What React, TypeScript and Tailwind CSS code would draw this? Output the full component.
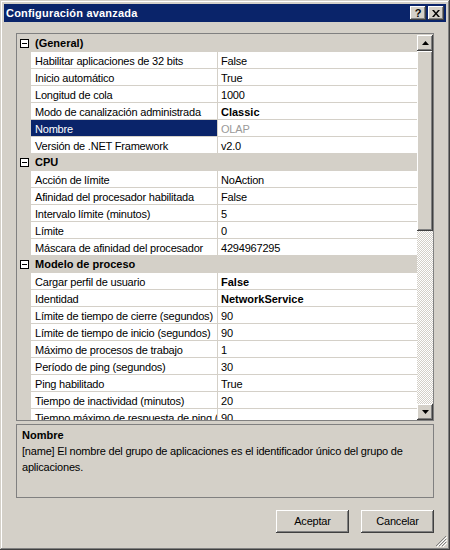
import React from 'react';

type Row = { name: string; value: string; bold?: boolean; readonly?: boolean; selected?: boolean };
type Cat = { title: string; rows: Row[] };

const cats: Cat[] = [
  {
    title: '(General)',
    rows: [
      { name: 'Habilitar aplicaciones de 32 bits', value: 'False' },
      { name: 'Inicio automático', value: 'True' },
      { name: 'Longitud de cola', value: '1000' },
      { name: 'Modo de canalización administrada', value: 'Classic', bold: true },
      { name: 'Nombre', value: 'OLAP', readonly: true, selected: true },
      { name: 'Versión de .NET Framework', value: 'v2.0' },
    ],
  },
  {
    title: 'CPU',
    rows: [
      { name: 'Acción de límite', value: 'NoAction' },
      { name: 'Afinidad del procesador habilitada', value: 'False' },
      { name: 'Intervalo límite (minutos)', value: '5' },
      { name: 'Límite', value: '0' },
      { name: 'Máscara de afinidad del procesador', value: '4294967295' },
    ],
  },
  {
    title: 'Modelo de proceso',
    rows: [
      { name: 'Cargar perfil de usuario', value: 'False', bold: true },
      { name: 'Identidad', value: 'NetworkService', bold: true },
      { name: 'Límite de tiempo de cierre (segundos)', value: '90' },
      { name: 'Límite de tiempo de inicio (segundos)', value: '90' },
      { name: 'Máximo de procesos de trabajo', value: '1' },
      { name: 'Período de ping (segundos)', value: '30' },
      { name: 'Ping habilitado', value: 'True' },
      { name: 'Tiempo de inactividad (minutos)', value: '20' },
      { name: 'Tiempo máximo de respuesta de ping (segundos)', value: '90' },
    ],
  },
];

const raised =
  'bg-[#d4d0c8] shadow-[inset_-1px_-1px_#404040,inset_1px_1px_#ffffff,inset_-2px_-2px_#808080,inset_2px_2px_#d4d0c8]';

function Minus() {
  return (
    <svg width="9" height="9" viewBox="0 0 9 9" className="block">
      <rect x="0.5" y="0.5" width="8" height="8" fill="#ffffff" stroke="#000000" />
      <line x1="2" y1="4.5" x2="7" y2="4.5" stroke="#000000" />
    </svg>
  );
}

function Arrow({ down }: { down?: boolean }) {
  return (
    <svg width="7" height="4" viewBox="0 0 7 4" className="block">
      {down ? <polygon points="0,0 7,0 3.5,4" fill="#000" /> : <polygon points="3.5,0 7,4 0,4" fill="#000" />}
    </svg>
  );
}

function CategoryRow({ title }: { title: string }) {
  return (
    <div className="flex h-[17px] bg-[#d4d0c8]">
      <div className="w-[14px] flex items-center justify-center pl-[1px]">
        <Minus />
      </div>
      <div className="pl-[4px] leading-[17px] font-bold tracking-normal">{title}</div>
    </div>
  );
}

function PropRow({ row }: { row: Row }) {
  return (
    <div className="flex h-[17px]">
      <div className="w-[14px] shrink-0 bg-[#d4d0c8]" />
      <div
        className={
          'w-[187px] shrink-0 border-b border-r border-[#d4d0c8] pl-[4px] pt-[1px] leading-[16px] whitespace-nowrap overflow-hidden ' +
          (row.selected ? 'bg-[#0a246a] text-white' : 'bg-white')
        }
      >
        {row.name}
      </div>
      <div
        className={
          'flex-1 border-b border-[#d4d0c8] bg-white pl-[3px] pt-[1px] leading-[16px] whitespace-nowrap overflow-hidden ' +
          (row.bold ? 'font-bold tracking-normal ' : '') +
          (row.readonly ? 'text-[#9a9a9a]' : 'text-black')
        }
      >
        {row.value}
      </div>
    </div>
  );
}

export default function App() {
  return (
    <div
      className="relative w-[450px] h-[550px] bg-[#d4d0c8] p-[4px] flex flex-col text-[11px] tracking-[-0.2px] text-black shadow-[inset_-1px_-1px_#404040,inset_1px_1px_#d4d0c8,inset_-2px_-2px_#808080,inset_2px_2px_#ffffff]"
      style={{ fontFamily: '"Liberation Sans", Arial, sans-serif' }}
    >
      {/* title bar */}
      <div className="h-[18px] bg-[#0a246a] flex items-center pl-[2px] pr-[2px]">
        <div className="text-white font-bold text-[11px] tracking-[0.2px] flex-1">Configuración avanzada</div>
        <div className={'w-[16px] h-[14px] flex items-center justify-center font-bold text-[11px] leading-none ' + raised}>?</div>
        <div className={'ml-[2px] w-[16px] h-[14px] flex items-center justify-center ' + raised}>
          <svg width="8" height="7" viewBox="0 0 8 7" className="block">
            <path d="M0 0 L2 0 L4 2.5 L6 0 L8 0 L5 3.5 L8 7 L6 7 L4 4.5 L2 7 L0 7 L3 3.5 Z" fill="#000" />
          </svg>
        </div>
      </div>

      <div className="flex-1 flex flex-col px-[12px] pt-[11px]">
        {/* property grid */}
        <div className="h-[388px] border border-[#808080] flex overflow-hidden">
          <div className="flex-1 pt-[1px] overflow-hidden">
            {cats.map((c) => (
              <div key={c.title}>
                <CategoryRow title={c.title} />
                {c.rows.map((r) => (
                  <PropRow key={r.name} row={r} />
                ))}
              </div>
            ))}
          </div>
          <div className="w-[16px] flex flex-col pt-[1px] bg-[#d4d0c8]">
            <div className={'h-[16px] flex items-center justify-center ' + raised}>
              <Arrow />
            </div>
            <div className={'h-[180px] ' + raised} />
            <div className="flex-1 bg-[repeating-conic-gradient(#d4d0c8_0_25%,#ffffff_0_50%)] bg-[length:2px_2px]" />
            <div className={'h-[16px] flex items-center justify-center ' + raised}>
              <Arrow down />
            </div>
          </div>
        </div>

        {/* description */}
        <div className="mt-[3px] h-[74px] border border-[#808080] px-[5px] pt-[2px] leading-[16px]">
          <div className="font-bold tracking-normal">Nombre</div>
          <div>[name] El nombre del grupo de aplicaciones es el identificador único del grupo de aplicaciones.</div>
        </div>

        {/* buttons */}
        <div className="mt-[12px] flex justify-end gap-[12px]">
          <div className={'w-[73px] h-[23px] flex items-center justify-center ' + raised}>Aceptar</div>
          <div className={'w-[73px] h-[23px] flex items-center justify-center ' + raised}>Cancelar</div>
        </div>
      </div>

      {/* resize grip */}
      <svg width="12" height="12" viewBox="0 0 12 12" className="absolute right-[3px] bottom-[3px]">
        <path d="M11 1 L1 11 M11 4 L4 11 M11 7 L7 11" stroke="#808080" strokeWidth="1" />
        <path d="M12 2 L2 12 M12 5 L5 12 M12 8 L8 12" stroke="#ffffff" strokeWidth="1" />
      </svg>
    </div>
  );
}
